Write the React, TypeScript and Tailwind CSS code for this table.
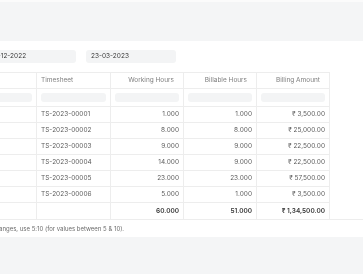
const rows = [
  { ts: "TS-2023-00001", wh: "1.000", bh: "1.000", amt: "₹ 3,500.00" },
  { ts: "TS-2023-00002", wh: "8.000", bh: "8.000", amt: "₹ 25,000.00" },
  { ts: "TS-2023-00003", wh: "9.000", bh: "9.000", amt: "₹ 22,500.00" },
  { ts: "TS-2023-00004", wh: "14.000", bh: "9.000", amt: "₹ 22,500.00" },
  { ts: "TS-2023-00005", wh: "23.000", bh: "23.000", amt: "₹ 57,500.00" },
  { ts: "TS-2023-00006", wh: "5.000", bh: "1.000", amt: "₹ 3,500.00" },
];

const cols = "grid grid-cols-[51px_74px_73px_73px_73px] w-[344px]";

function Cell({
  children,
  right,
  tall,
}: {
  children?: React.ReactNode;
  right?: boolean;
  tall?: boolean;
}) {
  return (
    <div
      className={`${tall ? "h-[16px]" : "h-[15px]"} flex items-center px-1 border-r border-[#ededed] ${
        right ? "justify-end" : ""
      }`}
    >
      {children}
    </div>
  );
}

function HeadCell({ children }: { children?: React.ReactNode }) {
  return (
    <div className="h-[15px] flex items-center justify-end pr-[9px] border-r border-[#ededed]">
      {children}
    </div>
  );
}

export default function App() {
  return (
    <div
      className="w-[363px] h-[274px] overflow-hidden bg-[#f4f5f6] text-[6.5px] leading-none will-change-transform"
      style={{ fontFamily: "Inter, 'Liberation Sans', sans-serif" }}
    >
      <div className="h-[2px] bg-[#fbfbfb]" />
      <div className="h-[39px]" />

      {/* report card */}
      <div className="bg-white h-[196px] -ml-[14px] w-[377px]">
        {/* filters */}
        <div className="flex gap-[10px] pt-[9px]">
          <div className="w-[90px] h-[13px] rounded-[3px] bg-[#f3f4f5] flex items-center px-[5px] text-[#383838]">
            01-12-2022
          </div>
          <div className="w-[90px] h-[13px] rounded-[3px] bg-[#f3f4f5] flex items-center px-[5px] text-[#383838]">
            23-03-2023
          </div>
        </div>

        {/* datatable */}
        <div className="mt-[9px] border-b border-[#ededed]">
          <div className={`${cols} border-y border-[#ededed] text-[#808080]`}>
            <Cell />
            <div className="h-[15px] flex items-center px-1 border-r border-[#ededed]">
              Timesheet
            </div>
            <HeadCell>Working Hours</HeadCell>
            <HeadCell>Billable Hours</HeadCell>
            <HeadCell>Billing Amount</HeadCell>
          </div>

          <div className={`${cols} border-b border-[#ededed]`}>
            {[0, 1, 2, 3, 4].map((i) => (
              <div key={i} className="h-[17px] flex items-center px-1 border-r border-[#ededed]">
                <div className="w-full h-[9px] rounded-[3px] bg-[#f3f4f5]" />
              </div>
            ))}
          </div>

          {rows.map((r) => (
            <div key={r.ts} className={`${cols} border-b border-[#ededed] text-[#5c5c5c]`}>
              <Cell />
              <Cell>{r.ts}</Cell>
              <Cell right>{r.wh}</Cell>
              <Cell right>{r.bh}</Cell>
              <Cell right>{r.amt}</Cell>
            </div>
          ))}

          <div className={`${cols} font-semibold text-[#383838]`}>
            <Cell tall />
            <Cell tall />
            <Cell tall right>60.000</Cell>
            <Cell tall right>51.000</Cell>
            <Cell tall right>₹ 1,34,500.00</Cell>
          </div>
        </div>

        <div className="h-[17px] flex items-center text-[6px] text-[#6b6b6b]">
          For ranges, use 5:10 (for values between 5 &amp; 10).
        </div>
      </div>
    </div>
  );
}
